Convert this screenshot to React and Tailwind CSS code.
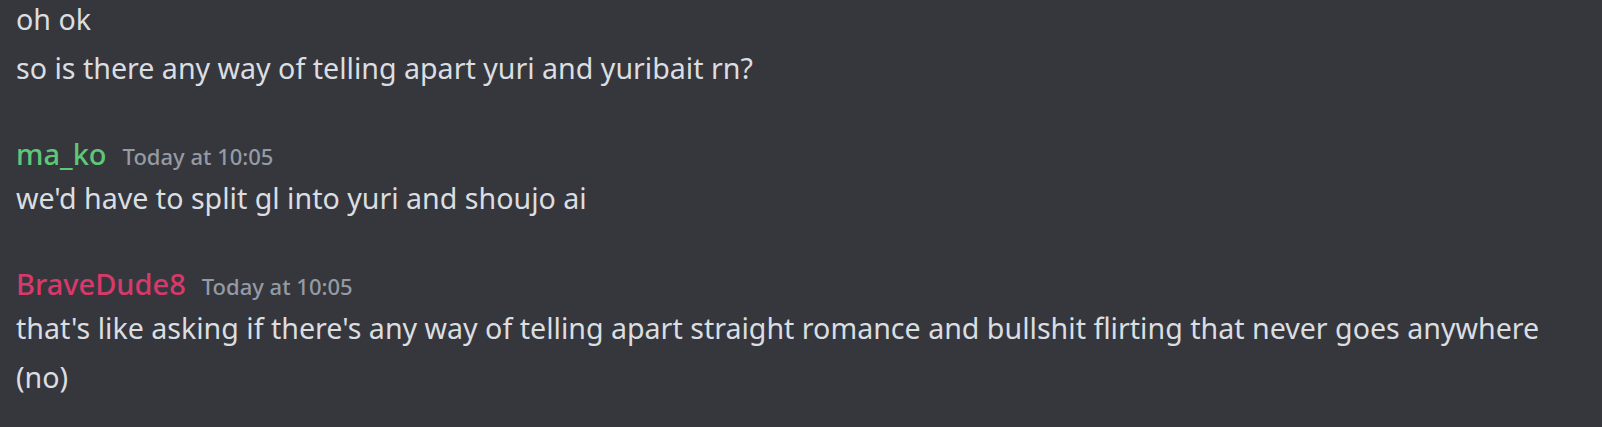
import React from "react";

const groups = [
  {
    lines: ["oh ok", "so is there any way of telling apart yuri and yuribait rn?"],
  },
  {
    user: "ma_ko",
    color: "text-[#5dc878]",
    time: "Today at 10:05",
    lines: ["we'd have to split gl into yuri and shoujo ai"],
  },
  {
    user: "BraveDude8",
    color: "text-[#d8396a]",
    time: "Today at 10:05",
    lines: [
      "that's like asking if there's any way of telling apart straight romance and bullshit flirting that never goes anywhere",
      "(no)",
    ],
  },
];

const App = () => {
  return (
    <div
      className="w-[1602px] h-[427px] overflow-hidden bg-[#36373d] text-[#dbdee1] pl-[16px]"
      style={{ fontFamily: '"Noto Sans", "Open Sans", sans-serif' }}
    >
      <div className="-mt-[6px] flex flex-col gap-[43px]">
        {groups.map((g, i) => (
          <div key={i}>
            {g.user && (
              <div className="h-[38px] flex items-baseline leading-[38px]">
                <span className={`text-[29px] font-medium ${g.color}`}>{g.user}</span>
                <span className="ml-[16px] text-[22px] font-medium text-[#949ba4]">
                  {g.time}
                </span>
              </div>
            )}
            {g.lines.map((line, j) => (
              <div key={j} className="h-[49px] leading-[49px] text-[28.6px] whitespace-nowrap">
                {line}
              </div>
            ))}
          </div>
        ))}
      </div>
    </div>
  );
};

export default App;
